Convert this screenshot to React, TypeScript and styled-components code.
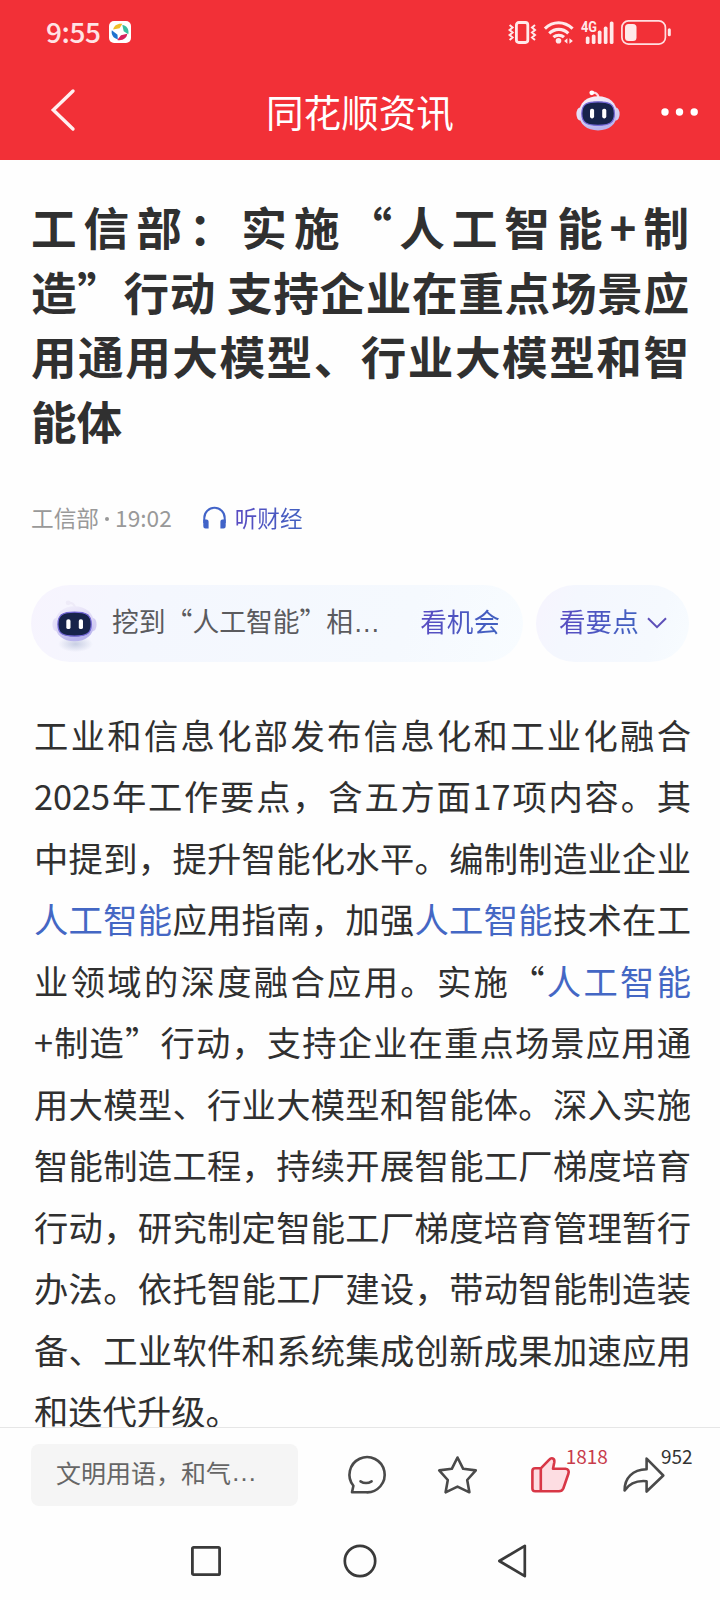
import React from "react";
import styled, { createGlobalStyle } from "styled-components";

const GlobalStyle = createGlobalStyle`
  * { box-sizing: border-box; }
  body {
    margin: 0;
    background: #fefefe;
    font-family: "Noto Sans CJK SC", "Liberation Sans", sans-serif;
  }
  svg { display: block; flex: none; overflow: visible; }
`;

const Page = styled.div`
  width: 720px;
  height: 1600px;
  display: flex;
  flex-direction: column;
  overflow: hidden;
  background: #fefefe;
`;

const Header = styled.header`
  flex: none;
  height: 160px;
  background: #f23037;
  color: #fff;
`;

const StatusBar = styled.div`
  height: 64px;
  padding: 0 49px 0 46px;
  display: flex;
  align-items: center;
  justify-content: space-between;
`;

const StatusGroup = styled.div<{ $gap: number }>`
  display: flex;
  align-items: center;
  gap: ${(p) => p.$gap}px;
`;

const Clock = styled.span`
  padding-bottom: 2px;
  font-size: 28px;
  font-weight: 500;
  letter-spacing: -0.4px;
  line-height: 60px;
  color: #ffe3e5;
`;

const NavBar = styled.div`
  height: 96px;
  padding: 0 22px 0 51px;
  display: grid;
  grid-template-columns: 215px auto 1fr;
  align-items: center;
`;

const NavTitle = styled.h1`
  margin: 0;
  padding-bottom: 3px;
  font-size: 37.6px;
  font-weight: 400;
  line-height: 56px;
`;

const NavActions = styled.div`
  display: flex;
  align-items: center;
  justify-content: flex-end;
  gap: 41px;
  svg:first-child { margin-bottom: 4px; }
`;

const Article = styled.main`
  flex: 1;
  min-height: 0;
  overflow: hidden;
  padding: 34px 31px 0 31px;
`;

const Title = styled.h2`
  margin: 0;
  font-size: 45.6px;
  font-weight: 700;
  line-height: 64.7px;
  color: #303030;
`;

const Line = styled.span<{ $last?: boolean }>`
  display: block;
  white-space: nowrap;
  text-align: justify;
  text-align-last: ${(p) => (p.$last ? "left" : "justify")};
`;

const Meta = styled.div`
  margin-top: 45px;
  height: 40px;
  display: flex;
  align-items: center;
  font-size: 22.7px;
  line-height: 40px;
  color: #999;
`;

const Dot = styled.i`
  width: 4px;
  height: 4px;
  margin: 2px 6px 0;
  border-radius: 50%;
  background: #999;
`;

const Listen = styled.span`
  margin-left: 31px;
  display: flex;
  align-items: center;
  gap: 9px;
`;

const GradientText = styled.span<{ $size: number }>`
  font-size: ${(p) => p.$size}px;
  white-space: nowrap;
  background: linear-gradient(100deg, #5a4ac2, #3f62c0);
  background-clip: text;
  -webkit-background-clip: text;
  color: transparent;
`;

const Pills = styled.div`
  margin: 47px 0 0;
  display: flex;
  gap: 13px;
`;

const Pill = styled.div<{ $width: number; $left: number; $right: number }>`
  flex: none;
  width: ${(p) => p.$width}px;
  height: 77px;
  padding: 0 ${(p) => p.$right}px 5px ${(p) => p.$left}px;
  border-radius: 39px;
  display: flex;
  align-items: center;
  background: linear-gradient(110deg, #f7f4fe 0%, #f4f7fe 25%, #f5f9fe 75%, #f8fcff 100%);
`;

const PillText = styled.span`
  flex: 1;
  margin-left: 15px;
  font-size: 26.8px;
  white-space: nowrap;
  color: #5b5b5e;
`;

const Ellipsis = styled.span<{ $size: number }>`
  font-family: "Liberation Sans", sans-serif;
  font-size: ${(p) => p.$size}px;
  line-height: 1;
`;

const Body = styled.p`
  margin: 42px -2px 0 3px;
  font-size: 34.3px;
  line-height: 61.5px;
  color: #303030;
`;

const Keyword = styled.a`
  color: #4467c4;
`;

const ActionBar = styled.footer`
  flex: none;
  height: 95px;
  border-top: 1px solid #e6e6e6;
  padding: 16px 28px 0 31px;
  display: flex;
  align-items: flex-start;
`;

const CommentInput = styled.div`
  width: 267px;
  height: 62px;
  padding: 0 0 6px 25px;
  border-radius: 8px;
  display: flex;
  align-items: center;
  font-size: 25px;
  color: #666;
  background: #f5f5f5;
  white-space: nowrap;
`;

const Actions = styled.div`
  flex: 1;
  height: 62px;
  padding: 0 27px 0 49px;
  display: flex;
  align-items: center;
  justify-content: space-between;
`;

const Action = styled.button`
  position: relative;
  padding: 0;
  border: 0;
  background: none;
`;

const Count = styled.span<{ $left: number; $color: string }>`
  position: absolute;
  left: ${(p) => p.$left}px;
  top: -11px;
  font-family: "Noto Sans CJK SC", sans-serif;
  font-size: 19px;
  line-height: 20px;
  color: ${(p) => p.$color};
`;

const SystemNav = styled.nav`
  flex: none;
  height: 78px;
  padding: 0 193px 0 191px;
  display: flex;
  align-items: center;
  justify-content: space-between;
`;

const Robot = ({ size, shadow }: { size: number; shadow?: boolean }) => {
  const id = shadow ? "robot-shadow" : "robot-plain";
  return (
    <svg width={size} height={size * (41 / 44)} viewBox="0 0 44 41">
      <defs>
        <linearGradient id={id} x1="0" y1="0" x2="0.3" y2="1">
          <stop offset="0" stopColor={shadow ? "#f3f1fc" : "#fff5f8"} />
          <stop offset="0.6" stopColor="#dcd6f4" />
          <stop offset="1" stopColor="#b9b4ee" />
        </linearGradient>
        <radialGradient id={id + "-floor"}>
          <stop offset="0" stopColor="#c9cfe4" />
          <stop offset="1" stopColor="#c9cfe4" stopOpacity="0" />
        </radialGradient>
      </defs>
      {shadow && <ellipse cx="23" cy="43" rx="17" ry="8" fill={`url(#${id}-floor)`} />}
      <path d="M15.5 2.8 Q22 2 22.6 8" fill="none" stroke={shadow ? "#eeebf8" : "#ffd9e2"} strokeWidth="2.2" strokeLinecap="round" />
      <circle cx="15.8" cy="2.8" r="2.4" fill={shadow ? "#eeebf8" : "#fff"} />
      <ellipse cx="4" cy="24" rx="3.6" ry="6.5" fill="#e4dff8" />
      <ellipse cx="40" cy="24" rx="3.6" ry="6.5" fill="#d3cdf3" />
      <path d="M22 6.2C33 6.2 41 12.5 41 23.5S33 40.4 22 40.4 3 34.5 3 23.5 11 6.2 22 6.2Z" fill={`url(#${id})`} />
      <path d="M22 11.8C33 11.8 38.4 14 38.4 23.6S33 35.4 22 35.4 5.8 33.2 5.8 23.6 11 11.8 22 11.8Z" fill="#17234a" stroke="#7468d8" strokeWidth="1.2" />
      <rect x="14" y="18.8" width="4.1" height="9.6" rx="1.8" fill="#fff" />
      <rect x="26.2" y="18.8" width="4.1" height="9.6" rx="1.8" fill="#fff" />
    </svg>
  );
};

const AppBadge = () => (
  <svg width="22" height="22" viewBox="0 0 22 22">
    <rect width="22" height="22" rx="5" fill="#fff" />
    <path d="M4.2 8.6C4.8 4.6 8.5 2.2 13.4 2.8L10.6 7.2Z" fill="#f0bd28" />
    <path d="M13.3 4C17.7 4.6 20.3 8.2 19.3 13.2L14.7 10.2Z" fill="#39bea0" />
    <path d="M18.3 12.8C17.8 16.8 14.2 20 8.2 19L12 14.2Z" fill="#d6215c" />
    <path d="M8.8 18.2C4.3 17.2 2 13.8 2.8 9.2L8.5 13.7Z" fill="#1e72cf" />
  </svg>
);

const StatusIcons = () => (
  <StatusGroup $gap={7}>
    <svg width="28" height="23" viewBox="0 0 28 23" fill="none" stroke="#ffe9ea">
      <rect x="7.4" y="1.5" width="11.4" height="20" rx="2.4" strokeWidth="2.8" />
      <path d="M.6 4l3 2.5-3 2.5 3 2.5-3 2.5 3 2.5-3 2.5M26 4l-3 2.5 3 2.5-3 2.5 3 2.5-3 2.5 3 2.5" strokeWidth="2" />
    </svg>
    <svg width="30" height="23" viewBox="0 0 30 23" fill="none" stroke="#ffe9ea" strokeWidth="3.1">
      <path d="M.9 7.7C9-.2 20.2-.2 28.6 7.7M5.2 12.3C11 7 18.8 7 24.3 12.3M9.4 16.2C12.5 13.5 17 13.5 20 16.2" />
      <circle cx="14.5" cy="19.8" r="2.8" fill="#ffe9ea" stroke="none" />
      <path d="M23.4 17.2v5.6l-3.3-2.8zM25.4 17.2v5.6l3.5-2.8z" fill="#ffe9ea" stroke="none" />
    </svg>
    <svg width="33" height="23" viewBox="0 0 33 23" fill="#ffe9ea">
      <text x="0" y="11" fontSize="14.5" fontWeight="700" textLength="16" lengthAdjust="spacingAndGlyphs" fontFamily="Roboto, sans-serif">4G</text>
      <rect x="4.8" y="15.5" width="3.7" height="7.5" rx="1.6" />
      <rect x="10.8" y="13.5" width="3.7" height="9.5" rx="1.6" />
      <rect x="16.8" y="9.6" width="3.7" height="13.4" rx="1.6" />
      <rect x="22.8" y="5.6" width="3.7" height="17.4" rx="1.6" />
      <rect x="28.8" y="0.4" width="3.7" height="22.6" rx="1.6" />
    </svg>
    <svg width="50" height="25" viewBox="0 0 50 25" fill="none">
      <rect x="0.9" y="0.9" width="43.5" height="23.2" rx="6.5" stroke="#ffdfe1" strokeWidth="1.7" />
      <rect x="4" y="4" width="11.5" height="17" rx="3.5" fill="#ffe9ea" />
      <rect x="46.8" y="8.3" width="3" height="8" rx="1.5" fill="#ffe9ea" />
    </svg>
  </StatusGroup>
);

const BackIcon = styled.svg`
  margin-bottom: 4px;
`;

const ChevronIcon = styled.svg`
  margin: 5px 0 0 8px;
`;

const dark = "#4a4a4a";

export default function App() {
  return (
    <Page>
      <GlobalStyle />
      <Header>
        <StatusBar>
          <StatusGroup $gap={8}>
            <Clock>9:55</Clock>
            <AppBadge />
          </StatusGroup>
          <StatusIcons />
        </StatusBar>
        <NavBar>
          <BackIcon width="24" height="42" viewBox="0 0 24 42" fill="none">
            <path d="M22 2L2.3 21 22 40" stroke="#fff0f0" strokeWidth="3.4" strokeLinecap="round" />
          </BackIcon>
          <NavTitle>同花顺资讯</NavTitle>
          <NavActions>
            <Robot size={44} />
            <svg width="37" height="8" viewBox="0 0 37 8" fill="#fff">
              <circle cx="4" cy="4" r="3.7" />
              <circle cx="18.5" cy="4" r="3.7" />
              <circle cx="33.2" cy="4" r="3.7" />
            </svg>
          </NavActions>
        </NavBar>
      </Header>

      <Article>
        <Title>
          <Line>工信部：实施“人工智能+制</Line>
          <Line>造”行动 支持企业在重点场景应</Line>
          <Line>用通用大模型、行业大模型和智</Line>
          <Line $last>能体</Line>
        </Title>

        <Meta>
          工信部
          <Dot />
          19:02
          <Listen>
            <svg width="23" height="22" viewBox="0 0 23 22" fill="none">
              <path d="M1.3 16V11a10.2 10.2 0 0 1 20.4 0v5" stroke="#4163c8" strokeWidth="2" />
              <path d="M.3 12.5H3.5Q5.6 12.5 5.6 14.6V21.5H2.5Q.3 21.5.3 19.3zM22.7 12.5H19.5Q17.4 12.5 17.4 14.6V21.5H20.5Q22.7 21.5 22.7 19.3z" fill="#4163c8" />
            </svg>
            <GradientText $size={22.6}>听财经</GradientText>
          </Listen>
        </Meta>

        <Pills>
          <Pill $width={492} $left={21} $right={23}>
            <Robot size={45} shadow />
            <PillText>
              挖到“人工智能”相<Ellipsis $size={27}>…</Ellipsis>
            </PillText>
            <GradientText $size={26.6}>看机会</GradientText>
          </Pill>
          <Pill $width={153} $left={23} $right={0}>
            <GradientText $size={26.6}>看要点</GradientText>
            <ChevronIcon width="20" height="12" viewBox="0 0 20 12" fill="none">
              <path d="M1 1.2l9 9 9-9" stroke="#5d4fb8" strokeWidth="2" />
            </ChevronIcon>
          </Pill>
        </Pills>

        <Body>
          <Line>工业和信息化部发布信息化和工业化融合</Line>
          <Line>2025年工作要点，含五方面17项内容。其</Line>
          <Line>中提到，提升智能化水平。编制制造业企业</Line>
          <Line>
            <Keyword>人工智能</Keyword>应用指南，加强<Keyword>人工智能</Keyword>技术在工
          </Line>
          <Line>
            业领域的深度融合应用。实施“<Keyword>人工智能</Keyword>
          </Line>
          <Line>+制造”行动，支持企业在重点场景应用通</Line>
          <Line>用大模型、行业大模型和智能体。深入实施</Line>
          <Line>智能制造工程，持续开展智能工厂梯度培育</Line>
          <Line>行动，研究制定智能工厂梯度培育管理暂行</Line>
          <Line>办法。依托智能工厂建设，带动智能制造装</Line>
          <Line>备、工业软件和系统集成创新成果加速应用</Line>
          <Line $last>和迭代升级。</Line>
        </Body>
      </Article>

      <ActionBar>
        <CommentInput>
          文明用语，和气<Ellipsis $size={26}>…</Ellipsis>
        </CommentInput>
        <Actions>
          <Action aria-label="评论">
            <svg width="38" height="38" viewBox="0 0 38 38" fill="none" stroke={dark} strokeWidth="2.6" strokeLinejoin="round" strokeLinecap="round">
              <path d="M19.2 36.3H5L6.4 29.8A17.6 17.6 0 1 1 19.2 36.3Z" />
              <path d="M13.5 25.3Q19 28.8 24.6 25.3" />
            </svg>
          </Action>
          <Action aria-label="收藏">
            <svg width="39" height="38" viewBox="0 0 39 38" fill="none" stroke={dark} strokeWidth="2.6" strokeLinejoin="round">
              <path d="M19.5 1.5L25.2 12.8 37.8 14.4 29.2 24 31.4 36.3 19.5 30.6 7.6 36.3 9.8 24 1.2 14.4 13.8 12.8Z" />
            </svg>
          </Action>
          <Action aria-label="点赞">
            <svg width="39" height="36" viewBox="0 0 39 36" fill="#fddde2" stroke="#d83746" strokeWidth="2.6" strokeLinejoin="round">
              <path d="M9.8 11.3H4.2Q1.4 11.3 1.4 14V31.5Q1.4 34.3 4.2 34.3H28Q31 34.3 32.3 31.5L37.3 17Q38.8 12.4 34.5 11.7H22L23.3 5.2C23.9 1 20.3 .2 18.3 2.6L9.8 11.3Z" />
              <path d="M9.8 11.3V34.3" />
            </svg>
            <Count $left={35} $color="#c83c4b">1818</Count>
          </Action>
          <Action aria-label="分享">
            <svg width="42" height="36" viewBox="0 0 42 36" fill="none" stroke={dark} strokeWidth="2.6" strokeLinejoin="round">
              <path d="M23.6 1.6L40.3 18.5 23.6 34.5V24.2C14 23.3 7 25.5 1.6 33.5 1.5 21 9.5 12.8 23.6 12.3Z" />
            </svg>
            <Count $left={38} $color="#333">952</Count>
          </Action>
        </Actions>
      </ActionBar>

      <SystemNav>
        <svg width="30" height="30" viewBox="0 0 30 30" fill="none" stroke="#3a3a3a" strokeWidth="2.8">
          <rect x="1.4" y="1.4" width="27.2" height="27.2" rx="1.2" />
        </svg>
        <svg width="34" height="34" viewBox="0 0 34 34" fill="none" stroke="#3a3a3a" strokeWidth="2.7">
          <circle cx="17" cy="17" r="15.2" />
        </svg>
        <svg width="29" height="34" viewBox="0 0 29 34" fill="none" stroke="#3a3a3a" strokeWidth="2.7" strokeLinejoin="round">
          <path d="M26.8 1.8V32.2L1.3 17Z" />
        </svg>
      </SystemNav>
    </Page>
  );
}
